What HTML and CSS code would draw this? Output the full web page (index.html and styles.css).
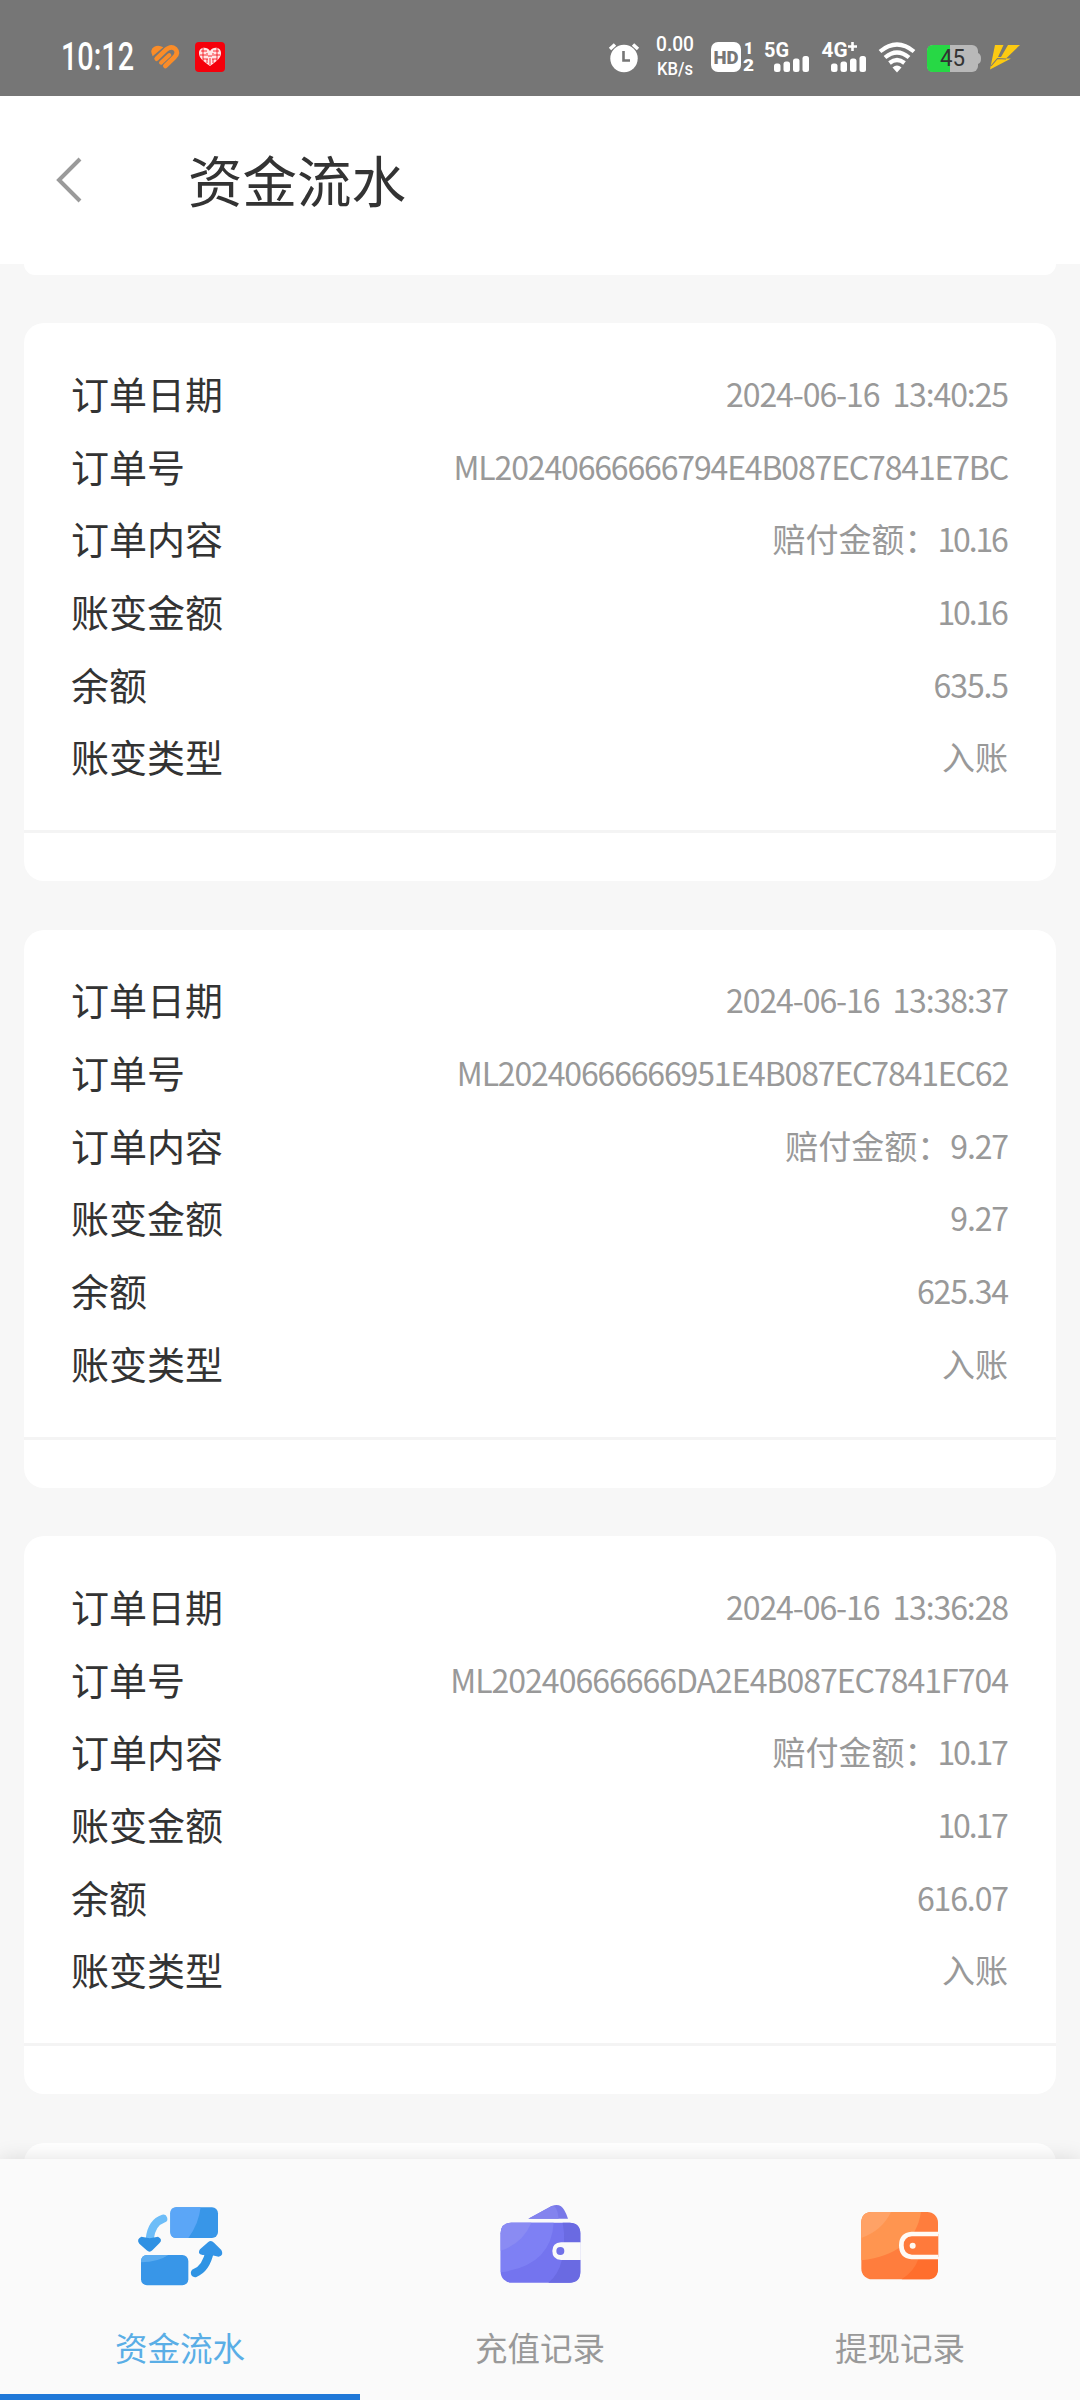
FILE: index.html
```
<!DOCTYPE html>
<html lang="zh-CN">
<head>
  <meta charset="UTF-8">
  <title>资金流水</title>
  <link rel="stylesheet" href="styles.css">
</head>
<body>

  <div class="status">
    <div class="status-left">
      <svg width="80" height="50" viewBox="56 30 80 50">
        <text x="61" y="70" font-size="38" font-weight="500" textLength="73" lengthAdjust="spacingAndGlyphs">10:12</text>
      </svg>
      <!-- heart -->
      <svg width="50" height="50" viewBox="-12 0 150 150">
        <path d="M38 79Q28 58 43 50Q56 44 70 52Z" fill="#fa8c28"/>
        <g fill="none" stroke="#fa8c28" stroke-linecap="round" stroke-linejoin="round">
          <path d="M50 86L76 61Q93 46 106 57Q116 68 104 81L76 108" stroke-width="14"/>
          <path d="M63 98L88 75" stroke-width="12"/>
        </g>
      </svg>
      <!-- red app -->
      <svg width="44" height="50" viewBox="186 30 44 50">
        <rect x="195" y="42" width="30" height="30" rx="4" fill="#f5000b"/>
        <path d="M210 66C203 61 199 58 199 53C199 47 207 46 210 51C213 46 221 47 221 53C221 58 217 61 210 66Z" fill="#ffe5e5"/>
        <path d="M201 51h6M213 51h6M200 55h6M214 55h6M203 59h5M212 59h5M203 48v13M217 48v13M207 56v-3M213 56v-3M207 63v-4M210 65v-7M213 63v-4M208 56h4" stroke="#f5000b" stroke-width="0.8"/>
      </svg>
    </div>
    <div class="status-right">
      <!-- alarm -->
      <svg width="42" height="50" viewBox="606 30 42 50">
        <circle cx="624" cy="58.5" r="13.7"/>
        <path d="M610 49L615 44.500M633 44.500L638 49" stroke="#fff" stroke-width="3.500"/>
        <path d="M623.500 51V60.500H630" fill="none" stroke="#767676" stroke-width="2.600"/>
      </svg>
      <!-- speed -->
      <svg width="54" height="50" viewBox="648 30 54 50">
        <text x="656" y="51" font-size="21" font-weight="500" textLength="38" lengthAdjust="spacingAndGlyphs">0.00</text>
        <text x="657" y="75" font-size="18" font-weight="500" textLength="36" lengthAdjust="spacingAndGlyphs">KB/s</text>
      </svg>
      <!-- HD -->
      <svg width="56" height="50" viewBox="702 30 56 50">
        <rect x="711" y="42" width="30" height="30" rx="7"/>
        <text class="cut" x="713.500" y="64" font-size="19" font-weight="900" textLength="25" lengthAdjust="spacingAndGlyphs">HD</text>
        <text x="744" y="54" font-size="16" font-weight="900" textLength="9">1</text>
        <text x="743" y="71" font-size="16" font-weight="900" textLength="11" lengthAdjust="spacingAndGlyphs">2</text>
      </svg>
      <!-- 5G -->
      <svg width="56" height="50" viewBox="758 30 56 50">
        <text x="764" y="56.500" font-size="20" font-weight="700" textLength="25" lengthAdjust="spacingAndGlyphs">5G</text>
        <rect x="774" y="63.500" width="6.500" height="8.500" rx="2.500"/>
        <rect x="783.500" y="61.500" width="6.500" height="10.500" rx="2.500"/>
        <rect x="793" y="58.500" width="6.500" height="13.500" rx="2.500"/>
        <rect x="802.500" y="56" width="6.500" height="16" rx="2.500"/>
      </svg>
      <!-- 4G+ -->
      <svg width="56" height="50" viewBox="814 30 56 50">
        <text x="821.500" y="56.500" font-size="20" font-weight="700" textLength="26" lengthAdjust="spacingAndGlyphs">4G</text>
        <path d="M848 46.500h9M852.500 42v9" stroke="#fff" stroke-width="2.600"/>
        <rect x="831" y="63.500" width="6.500" height="8.500" rx="2.500"/>
        <rect x="840.500" y="61.500" width="6.500" height="10.500" rx="2.500"/>
        <rect x="850" y="58.500" width="6.500" height="13.500" rx="2.500"/>
        <rect x="859.500" y="56" width="6.500" height="16" rx="2.500"/>
      </svg>
      <!-- wifi -->
      <svg width="50" height="50" viewBox="870 30 50 50">
        <g fill="none" stroke="#fff" stroke-width="4.200">
          <path d="M880 51.500Q897 37.500 914 51.500"/>
          <path d="M885 57.500Q897 47.500 909 57.500"/>
          <path d="M889.500 63Q897 57 904.500 63"/>
        </g>
        <path d="M892.500 67.500Q897 63.500 901.500 67.500L897 72.500Z"/>
      </svg>
      <!-- battery -->
      <svg width="66" height="50" viewBox="920 30 66 50">
        <path d="M978 53q3 1 3 5.500t-3 5.500h-3v-11z" fill="#b9b9b9"/>
        <rect x="927" y="45" width="51" height="27" rx="6" fill="#b9b9b9"/>
        <path d="M950 45h-17q-6 0-6 6v15q0 6 6 6h17z" fill="#27d845"/>
        <text class="level" x="940" y="66" font-size="24" textLength="25" lengthAdjust="spacingAndGlyphs">45</text>
      </svg>
      <!-- charging -->
      <svg width="94" height="50" viewBox="986 30 94 50">
        <path d="M995 45H1003.500L998 57H1001L1008 45H1020L1006 58.500H1011L990 69.500Z" fill="#fcca12"/>
        <path d="M991 66L997.500 58.500L1006 59" fill="none" stroke="#767676" stroke-width="1.100"/>
      </svg>
    </div>
  </div>

  <div class="header">
    <svg class="back" width="28" height="48" viewBox="0 0 28 48">
      <path d="M25 3L4 24L25 45" fill="none" stroke="#9a9a9a" stroke-width="4"/>
    </svg>
    <h1>资金流水</h1>
  </div>

  <div class="list">
    <div class="card card-last"></div>

    <div class="card">
      <div class="rows">
        <div class="row"><span>订单日期</span><span class="value date">2024-06-16 13:40:25</span></div>
        <div class="row"><span>订单号</span><span class="value order">ML20240666666794E4B087EC7841E7BC</span></div>
        <div class="row"><span>订单内容</span><span class="value">赔付金额：<span class="num tight">10.16</span></span></div>
        <div class="row"><span>账变金额</span><span class="value num tight">10.16</span></div>
        <div class="row"><span>余额</span><span class="value num">635.5</span></div>
        <div class="row"><span>账变类型</span><span class="value">入账</span></div>
      </div>
    </div>

    <div class="card">
      <div class="rows">
        <div class="row"><span>订单日期</span><span class="value date">2024-06-16 13:38:37</span></div>
        <div class="row"><span>订单号</span><span class="value order">ML20240666666951E4B087EC7841EC62</span></div>
        <div class="row"><span>订单内容</span><span class="value">赔付金额：<span class="num">9.27</span></span></div>
        <div class="row"><span>账变金额</span><span class="value num">9.27</span></div>
        <div class="row"><span>余额</span><span class="value num">625.34</span></div>
        <div class="row"><span>账变类型</span><span class="value">入账</span></div>
      </div>
    </div>

    <div class="card">
      <div class="rows">
        <div class="row"><span>订单日期</span><span class="value date">2024-06-16 13:36:28</span></div>
        <div class="row"><span>订单号</span><span class="value order wide">ML20240666666DA2E4B087EC7841F704</span></div>
        <div class="row"><span>订单内容</span><span class="value">赔付金额：<span class="num tight">10.17</span></span></div>
        <div class="row"><span>账变金额</span><span class="value num tight">10.17</span></div>
        <div class="row"><span>余额</span><span class="value num">616.07</span></div>
        <div class="row"><span>账变类型</span><span class="value">入账</span></div>
      </div>
    </div>

    <div class="card"></div>
  </div>

  <div class="tabs">
    <div class="tab active">
      <svg width="120" height="120" viewBox="0 0 360 360">
        <rect x="151" y="82" width="143" height="92" rx="18" fill="#3896e8"/>
        <path d="M169 82H242Q236 132 205 174H169Q151 174 151 156V100Q151 82 169 82Z" fill="#5ba6f7"/>
        <rect x="63" y="225" width="142" height="91" rx="18" fill="#3896e8"/>
        <path d="M63 245Q63 225 81 225H145Q115 246 63 247Z" fill="#5bacf0"/>
        <path d="M130 116Q94 128 89 178" fill="none" stroke="#6dbdf8" stroke-width="24" stroke-linecap="round"/>
        <path d="M64 170L89 175L114 170Q130 178 118 190L97 211Q89 219 80 211L58 191Q48 178 64 170Z" fill="#2f91e3"/>
        <path d="M225 279Q258 266 269 215" fill="none" stroke="#2f94e4" stroke-width="25" stroke-linecap="round"/>
        <path d="M248 225Q230 222 240 208L264 187Q273 179 282 188L304 210Q313 226 296 230L270 224Z" fill="#3394e6"/>
      </svg>
      <span>资金流水</span>
    </div>
    <div class="tab">
      <svg width="120" height="120" viewBox="0 0 360 360">
        <path d="M145 116L215 78Q241 68 253 91Q259 101 264 116Z" fill="#7878e8"/>
        <path d="M145 116L215 78Q232 74 236 116Z" fill="#8383ee"/>
        <rect x="62" y="128" width="239" height="180" rx="32" fill="#7474ef"/>
        <path d="M94 128H221Q214 256 62 277V160Q62 128 94 128Z" fill="#7e80f4"/>
        <path d="M94 128H154Q128 190 62 212V160Q62 128 94 128Z" fill="#8a8bf3"/>
        <path d="M248 128H269Q301 128 301 160V188H252Q254 158 248 128ZM205 308Q235 285 246 239H301V276Q301 308 269 308Z" fill="#6a6ae2"/>
        <path d="M302 187H243Q217 189 217 213Q217 238 243 240H302Z" fill="#fafafa"/>
        <circle cx="241" cy="213" r="12" fill="#7171e8"/>
      </svg>
      <span>充值记录</span>
    </div>
    <div class="tab">
      <svg width="120" height="120" viewBox="0 0 360 360">
        <rect x="64" y="96" width="230" height="202" rx="32" fill="#ff7d3d"/>
        <path d="M96 96H243Q224 222 64 241V128Q64 96 96 96Z" fill="#ff9550"/>
        <path d="M96 96H153Q127 151 64 174V128Q64 96 96 96Z" fill="#ffa266"/>
        <path d="M185 298Q222 275 235 238H294V266Q294 298 262 298Z" fill="#ff6e2d"/>
        <path d="M295 162H215Q184 165 184 196Q184 228 215 231H295" fill="#ff7a3b" stroke="#fffaf5" stroke-width="14"/>
        <circle cx="218" cy="197" r="9" fill="#fff8f0"/>
      </svg>
      <span>提现记录</span>
    </div>
  </div>

</body>
</html>
```
FILE: styles.css
```
* {
  box-sizing: border-box;
}
body {
  margin: 0;
  width: 1080px;
  height: 2400px;
  display: flex;
  flex-direction: column;
  overflow: hidden;
  background: #f7f7f7;
  color: #333;
  font-family: "Noto Sans CJK SC", sans-serif;
}
svg {
  display: block;
}

/* status bar */
.status {
  height: 96px;
  flex: none;
  padding: 30px 0 0 56px;
  display: flex;
  justify-content: space-between;
  background: #767676;
}
.status-left, .status-right {
  display: flex;
}
.status svg {
  fill: #fff;
  font-family: Roboto, sans-serif;
}
.status .cut {
  fill: #767676;
}
.status .level {
  fill: #333;
}

.header {
  height: 168px;
  flex: none;
  display: flex;
  align-items: center;
  padding-left: 55px;
  background: #fff;
}
.header h1 {
  margin: -3px 0 0 105px;
  font-size: 54.5px;
  line-height: 80px;
  font-weight: 400;
}

/* order cards */
.list {
  flex: 1;
  min-height: 0;
  overflow: hidden;
}
.card {
  height: 558px;
  margin: 0 24px 48.5px;
  background: #fff;
  border-radius: 20px;
}
.card-last {
  height: 11px;
  margin-bottom: 48px;
  border-radius: 0 0 20px 20px;
}
.rows {
  height: 510px;
  padding: 33.5px 48px 0 47px;
  border-bottom: 3px solid #f4f4f4;
}
.row {
  height: 72.7px;
  display: flex;
  justify-content: space-between;
  align-items: center;
  font-size: 38px;
  line-height: 72px;
}
.value {
  color: #999;
  font-size: 33px;
  white-space: nowrap;
}
.date, .order, .num {
  font-size: 32px;
}
.date {
  letter-spacing: -1.1px;
  word-spacing: 7px;
}
.order {
  letter-spacing: -1.15px;
}
.wide {
  letter-spacing: -1px;
}
.num {
  letter-spacing: -1.1px;
}
.tight {
  letter-spacing: -2.2px;
  margin-right: 1.5px;
}

/* bottom tabs */
.tabs {
  position: relative;
  height: 241px;
  flex: none;
  display: flex;
  background: #fafafa;
  box-shadow: 0 0 20px rgba(0, 0, 0, 0.12);
}
.tab {
  width: 360px;
  padding-top: 21px;
  display: flex;
  flex-direction: column;
  align-items: center;
  color: #999;
  font-size: 32.5px;
  border-bottom: 6px solid transparent;
}
.tab span {
  margin-top: 23px;
  line-height: 48px;
}
.active {
  color: #5aaee6;
  border-bottom-color: #1f78d8;
}
```
